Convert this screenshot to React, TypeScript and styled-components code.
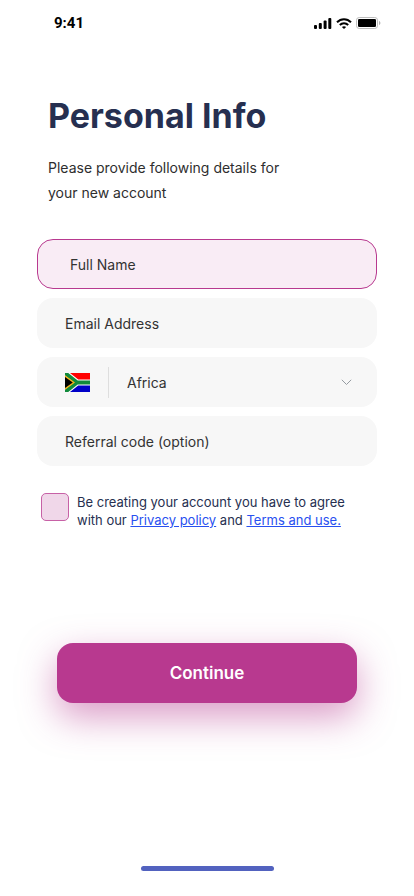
import React from "react";
import styled, { createGlobalStyle } from "styled-components";

const GlobalStyle = createGlobalStyle`
  *, *::before, *::after { box-sizing: border-box; }
  body { margin: 0; background: #ffffff; font-family: Inter, "Liberation Sans", sans-serif; }
  button, input, select { font: inherit; }
`;

const Screen = styled.main`
  display: flex;
  flex-direction: column;
  min-height: 100vh;
`;

const StatusBar = styled.header`
  display: flex;
  align-items: center;
  justify-content: space-between;
  height: 46px;
  padding: 0 33px 0 54px;
`;

const Clock = styled.time`
  font-family: Roboto, sans-serif;
  font-size: 15px;
  font-weight: 700;
  line-height: 20px;
  color: #000000;
`;

const StatusIcons = styled.div`
  display: flex;
  align-items: center;
  gap: 4px;
`;

const Intro = styled.section`
  padding: 46px 48px 0;
`;

const Title = styled.h1`
  margin: 0;
  font-size: 34px;
  font-weight: 700;
  line-height: 48px;
  color: #262f50;
`;

const Lead = styled.p`
  max-width: 260px;
  margin: 15px 0 0;
  font-size: 14px;
  line-height: 25px;
  color: #2e2e2e;
`;

const Form = styled.form`
  display: flex;
  flex-direction: column;
  padding: 34px 37px 0;
`;

const Fields = styled.div`
  display: flex;
  flex-direction: column;
  gap: 9px;
`;

const TextField = styled.input<{ $active?: boolean }>`
  width: 100%;
  height: 50px;
  padding: 0 ${(p) => (p.$active ? 32 : 28)}px;
  border: ${(p) => (p.$active ? "1px solid #b8398f" : "0")};
  border-radius: 16px;
  outline: none;
  background: ${(p) => (p.$active ? "#f9ecf5" : "#f7f7f7")};
  font-size: 14px;
  color: #333333;

  &::placeholder {
    color: #333333;
    opacity: 1;
  }
`;

const CountryField = styled.label`
  display: flex;
  align-items: center;
  height: 50px;
  padding: 0 25px 0 28px;
  border-radius: 16px;
  background: #f7f7f7;
`;

const Divider = styled.span`
  width: 1px;
  height: 31px;
  margin: 0 18px;
  background: #dedede;
`;

const CountrySelect = styled.select`
  flex: 1;
  min-width: 0;
  height: 100%;
  padding: 0;
  border: 0;
  outline: none;
  appearance: none;
  background: transparent;
  font-size: 14px;
  color: #333333;
`;

const Consent = styled.div`
  display: flex;
  align-items: flex-start;
  gap: 8px;
  padding: 27px 4px 0;
`;

const ConsentBox = styled.input`
  flex: none;
  width: 28px;
  height: 28px;
  margin: 0;
  border: 1px solid #c761a6;
  border-radius: 5px;
  appearance: none;
  background: #f0d7e9;

  &:checked {
    background: #b8398f;
  }
`;

const ConsentText = styled.label`
  font-size: 13px;
  line-height: 18px;
  color: #262f50;
`;

const TextLink = styled.a`
  color: #2850f0;
  text-decoration: underline;
`;

const Continue = styled.button`
  height: 60px;
  margin: 114px 20px 0;
  border: 0;
  border-radius: 16px;
  background: #b8398f;
  box-shadow: 0 14px 36px rgba(184, 57, 143, 0.5);
  font-size: 17px;
  font-weight: 600;
  color: #ffffff;
`;

const HomeIndicator = styled.div`
  width: 133px;
  height: 5px;
  margin: auto auto 25px;
  border-radius: 3px;
  background: #5262bf;
`;

const Signal = () => (
  <svg width="18" height="11" viewBox="0 0 18 11" aria-hidden="true">
    <rect x="0" y="7" width="3" height="4" rx="1" />
    <rect x="4.8" y="5" width="3" height="6" rx="1" />
    <rect x="9.6" y="2.5" width="3" height="8.5" rx="1" />
    <rect x="14.3" y="0" width="3" height="11" rx="1" />
  </svg>
);

const Wifi = () => (
  <svg width="16" height="11" viewBox="0 0 16 11" fill="none" stroke="#000" strokeWidth="2" aria-hidden="true">
    <path d="M1 4.3C5 .2 11 .2 15 4.3" />
    <path d="M3.8 7C6.2 4.6 9.8 4.6 12.2 7" />
    <path d="M8 11 5.9 8.9C7.1 7.9 8.9 7.9 10.1 8.9Z" fill="#000" stroke="none" />
  </svg>
);

const Battery = () => (
  <svg width="25" height="12" viewBox="0 0 25 12" aria-hidden="true">
    <rect x=".5" y=".5" width="21" height="11" rx="2.7" fill="none" stroke="#bdbdbd" />
    <rect x="2" y="2" width="18" height="8" rx="1.3" />
    <path d="M23 4v4c.8-.3 1.4-1.1 1.4-2S23.8 4.3 23 4Z" fill="#b3b3b3" />
  </svg>
);

const Flag = () => (
  <svg width="25" height="19" viewBox="0 0 25 19" aria-hidden="true">
    <path d="M0 0h25v9.5H0Z" fill="#ff0000" />
    <path d="M0 9.5h25V19H0Z" fill="#0000c8" />
    <path d="M0 0 12 9.5 0 19Z" fill="#fff" />
    <path d="M-1-.8 12 9.5-1 19.8M11 9.5H25" fill="none" stroke="#fff" strokeWidth="6.2" />
    <path d="M-1-.8 12 9.5-1 19.8M11 9.5H25" fill="none" stroke="#128a3c" strokeWidth="4" />
    <path d="M0 2.2 10 9.5 0 16.8Z" fill="#f4b41a" />
    <path d="M0 4 7.8 9.5 0 15Z" fill="#000" />
  </svg>
);

const Chevron = () => (
  <svg width="11" height="7" viewBox="0 0 11 7" fill="none" stroke="#959ba1" aria-hidden="true">
    <path d="M.8.8 5.5 5.5 10.2.8" />
  </svg>
);

export default function App() {
  return (
    <>
      <GlobalStyle />
      <Screen>
        <StatusBar>
          <Clock>9:41</Clock>
          <StatusIcons>
            <Signal />
            <Wifi />
            <Battery />
          </StatusIcons>
        </StatusBar>
        <Intro>
          <Title>Personal Info</Title>
          <Lead>Please provide following details for your new account</Lead>
        </Intro>
        <Form onSubmit={(e) => e.preventDefault()}>
          <Fields>
            <TextField $active type="text" placeholder="Full Name" aria-label="Full Name" />
            <TextField type="email" placeholder="Email Address" aria-label="Email Address" />
            <CountryField>
              <Flag />
              <Divider />
              <CountrySelect aria-label="Country" defaultValue="Africa">
                <option>Africa</option>
              </CountrySelect>
              <Chevron />
            </CountryField>
            <TextField type="text" placeholder="Referral code (option)" aria-label="Referral code (option)" />
          </Fields>
          <Consent>
            <ConsentBox id="consent" type="checkbox" />
            <ConsentText htmlFor="consent">
              <span>Be creating your account you have to agree</span>
              <br />
              <span>with our </span>
              <TextLink href="#privacy">Privacy policy</TextLink>
              <span> and </span>
              <TextLink href="#terms">Terms and use.</TextLink>
            </ConsentText>
          </Consent>
          <Continue type="submit">Continue</Continue>
        </Form>
        <HomeIndicator />
      </Screen>
    </>
  );
}
